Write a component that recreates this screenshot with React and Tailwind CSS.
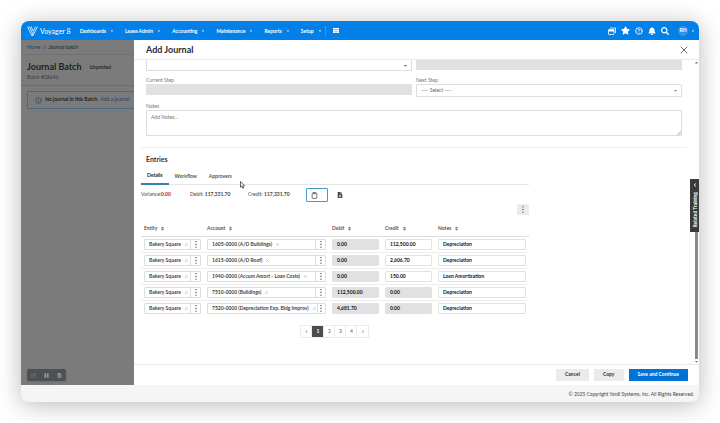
import { Clipboard, CircleHelp, Info, X } from 'lucide-react';
import { FaBell, FaCaretDown, FaCaretUp, FaChevronUp, FaFileExcel, FaPause, FaSearch, FaSort, FaStar } from 'react-icons/fa';
import { FiExternalLink } from 'react-icons/fi';

const menus = ['Dashboards', 'Lease Admin', 'Accounting', 'Maintenance', 'Reports', 'Setup'];

const entries = [
  { id: 1, account: '1605-0000 (A/D Buildings)', debit: '0.00', credit: '112,500.00', notes: 'Depreciation' },
  { id: 2, account: '1615-0000 (A/D Roof)', debit: '0.00', credit: '2,606.70', notes: 'Depreciation' },
  { id: 3, account: '1940-0000 (Accum Amort - Loan Costs)', debit: '0.00', credit: '150.00', notes: 'Loan Amortization' },
  { id: 4, account: '7510-0000 (Buildings)', debit: '112,500.00', credit: '0.00', notes: 'Depreciation' },
  { id: 5, account: '7520-0000 (Depreciation Exp. Bldg Improv)', debit: '4,681.70', credit: '0.00', notes: 'Depreciation' },
];

function Logo() {
  return (
    <svg viewBox="0 0 22 20" className="w-[11px] h-[10px]" fill="none" stroke="white" strokeWidth="1.6">
      <path d="M1 1 L9.5 19 L12.5 13 M4.5 1 L11 14.5 M8 1 L12.5 10.5 L17 1 M10 19 H12 L21 1" />
    </svg>
  );
}

function Kebab() {
  return (
    <svg viewBox="0 0 2 7" className="w-[2px] h-[7px]" fill="#555">
      <rect x="0.3" y="0.2" width="1.3" height="1.1" />
      <rect x="0.3" y="2.9" width="1.3" height="1.1" />
      <rect x="0.3" y="5.6" width="1.3" height="1.1" />
    </svg>
  );
}

function Cursor() {
  return (
    <svg viewBox="0 0 10 16" className="absolute left-[37px] top-[10px] w-[5px] h-[8px]" fill="white" stroke="#333" strokeWidth="1.5">
      <path d="M1 1 V12.5 L3.8 10 L5.6 14.5 L7.4 13.7 L5.6 9.5 H9 Z" />
    </svg>
  );
}

function Navbar() {
  return (
    <header className="flex items-center h-[19px] pl-[6px] pr-[4px] bg-[#0380e8] text-white">
      <Logo />
      <span className="ml-[2px] text-[7px] leading-[10px]">Voyager 8</span>
      <nav className="flex items-center gap-[11px] ml-[9px]">
        {menus.map((m) => (
          <button key={m} className="flex items-center gap-[4px] text-[5px] leading-[8px] font-bold">
            {m} <FaCaretDown size={4} />
          </button>
        ))}
      </nav>
      <span className="w-px h-[10px] ml-[3px] bg-[#3d9cee]" />
      <button aria-label="Grid" className="ml-[7px]">
        <svg viewBox="0 0 6 5" className="w-[6px] h-[5px]" fill="white">
          <rect width="6" height="1.4" />
          <path d="M0 1.8 H2.8 V3.2 H0 Z M3.2 1.8 H6 V3.2 H3.2 Z M0 3.6 H2.8 V5 H0 Z M3.2 3.6 H6 V5 H3.2 Z" />
        </svg>
      </button>
      <div className="flex items-center gap-[5px] ml-auto">
        <button aria-label="Windows">
          <svg viewBox="0 0 16 16" className="w-[8px] h-[8px]" fill="none" stroke="white" strokeWidth="1.6">
            <rect x="1" y="5" width="11" height="10" rx="1" />
            <path d="M1 7 H12" strokeWidth="3.5" />
            <path d="M4 2 H15 V12" />
          </svg>
        </button>
        <button aria-label="Favorites"><FaStar size={9} /></button>
        <button aria-label="Help"><CircleHelp size={8} strokeWidth={2.5} /></button>
        <button aria-label="Notifications"><FaBell size={8} /></button>
        <button aria-label="Search"><FaSearch size={8} /></button>
      </div>
      <button className="flex items-center gap-[3px] ml-[9px] text-[5px] font-bold">
        <span className="flex items-center justify-center size-[10px] rounded-full bg-[#2f93e6]">RH</span>
        <FaCaretDown size={4} />
      </button>
    </header>
  );
}

function BatchPage() {
  return (
    <aside className="flex flex-col w-[113px] shrink-0 overflow-hidden bg-[#7b7b7b] text-[#1d1f22]">
      <div className="flex items-center gap-[3px] h-[15px] px-[6px] border-b border-[#717171] text-[5px] leading-[8px]">
        <a href="#home" className="text-[#1c4469]">Home</a> <span>/</span> <span>Journal batch</span>
      </div>
      <div className="h-[31px] pt-[6px] px-[6px] border-b border-[#6c6c6c]">
        <div className="flex items-center gap-[8px]">
          <h1 className="text-[9px] leading-[12px] font-bold whitespace-nowrap">Journal Batch</h1>
          <span className="text-[5px] leading-[8px] font-semibold">Unposted</span>
        </div>
        <p className="text-[5px] leading-[8px] text-[#3c3c3c]">Batch #28646</p>
      </div>
      <div className="flex items-center gap-[2px] h-[18px] mt-[5px] ml-[6px] pl-[7px] border border-r-0 border-[#476a88] rounded-l-[1px] text-[5px] whitespace-nowrap">
        <Info size={7} className="mr-px text-[#1c4469]" />
        <strong>No journal in this Batch.</strong>
        <a href="#add" className="text-[#1c4469]">Add a journal</a>
      </div>
      <div className="flex items-center justify-around w-[39px] h-[12px] mt-auto mb-[4px] ml-[6px] rounded-[2px] bg-[#4c5154] text-[#8f9497] shadow">
        <button aria-label="Open"><FiExternalLink size={5} /></button>
        <button aria-label="Pause"><FaPause size={5} /></button>
        <button aria-label="Stop"><FaFileExcel size={5} /></button>
      </div>
    </aside>
  );
}

function LookupField({ value, label }) {
  return (
    <div className="flex h-[11px] border border-[#dcdcdc] rounded-[1px] bg-white">
      <div className="flex items-center gap-[3px] flex-1 pl-[4px] whitespace-nowrap font-bold text-[#444]">
        {value}
        <button aria-label={`Clear ${label}`} className="text-[#999]"><X size={5} /></button>
      </div>
      <button aria-label={`${label} options`} className="flex items-center justify-center w-[10px] border-l border-[#dcdcdc]"><Kebab /></button>
    </div>
  );
}

function EntryInput({ value, label, disabled }) {
  return (
    <input
      aria-label={label}
      defaultValue={value}
      disabled={disabled}
      className="block w-full h-[11px] px-[4px] border border-[#e2e2e2] rounded-[1px] font-bold text-[#111] disabled:bg-[#e1e1e1]"
    />
  );
}

function EntriesTable() {
  return (
    <table className="w-full mt-[6px] table-fixed text-[5px] leading-[8px]">
      <colgroup>
        <col className="w-[63px]" />
        <col className="w-[125px]" />
        <col className="w-[53px]" />
        <col className="w-[53px]" />
        <col />
      </colgroup>
      <thead>
        <tr className="h-[15px] border-b border-[#dedede] text-left text-[#555]">
          {['Entity', 'Account', 'Debit', 'Credit', 'Notes'].map((h) => (
            <th key={h} className="px-[3px] py-0 font-bold">
              <span className="flex items-center gap-[3px]">{h} <FaSort size={5} className="text-[#777]" /></span>
            </th>
          ))}
        </tr>
      </thead>
      <tbody>
        {entries.map((e) => (
          <tr key={e.id} className="h-[16px] border-b border-[#eeeeee] last:border-b-0">
            <td className="px-[3px] py-0"><LookupField value="Bakery Square" label="entity" /></td>
            <td className="px-[3px] py-0"><LookupField value={e.account} label="account" /></td>
            <td className="px-[3px] py-0"><EntryInput value={e.debit} label="Debit" disabled /></td>
            <td className="px-[3px] py-0"><EntryInput value={e.credit} label="Credit" disabled={e.credit === '0.00'} /></td>
            <td className="px-[3px] py-0"><EntryInput value={e.notes} label="Notes" /></td>
          </tr>
        ))}
      </tbody>
    </table>
  );
}

function JournalForm() {
  return (
    <form className="px-[12px] text-[5px]">
      <div className="grid grid-cols-2 gap-x-[4px]">
        <div className="flex items-center justify-end h-[11px] pr-[3px] border border-t-0 border-[#dedede] text-[#666]"><FaCaretDown size={5} /></div>
        <div className="h-[10px] bg-[#e1e1e1]" />
        <div className="mt-[6px]">
          <label htmlFor="current" className="block mb-[1px] leading-[6px] text-[#777]">Current Step</label>
          <input id="current" disabled className="block w-full h-[11px] bg-[#e1e1e1]" />
        </div>
        <div className="mt-[6px]">
          <label htmlFor="next" className="block mb-[1px] leading-[6px] text-[#777]">Next Step</label>
          <div className="relative">
            <select id="next" className="block w-full h-[13px] px-[4px] appearance-none border border-[#dedede] rounded-[1px] text-[#666]">
              <option>---- Select ----</option>
            </select>
            <FaCaretDown size={5} className="absolute right-[4px] top-[4px] text-[#888]" />
          </div>
        </div>
      </div>
      <label htmlFor="notes" className="block mt-[6px] mb-[1px] leading-[6px] text-[#777]">Notes</label>
      <div className="relative">
        <textarea id="notes" placeholder="Add Notes..." className="block w-full h-[26px] px-[4px] py-[2px] leading-[8px] border border-[#dedede] resize-none placeholder:text-[#777]" />
        <svg viewBox="0 0 4 4" className="absolute right-[1px] bottom-[1px] size-[4px]" stroke="#888" strokeWidth="0.6">
          <path d="M0 4 L4 0 M2 4 L4 2" />
        </svg>
      </div>
    </form>
  );
}

function Entries() {
  return (
    <section className="mx-[7px] mt-[11px] pt-[6px] border-t border-[#f0f0f0] text-[5px]">
      <h3 className="pl-[5px] text-[7px] leading-[10px] font-bold text-[#333]">Entries</h3>
      <div className="w-[71%]">
        <div className="flex mt-[7px] border-b border-[#e6e6e6] leading-[8px] text-[#555]">
          <button className="px-[6px] pb-[4px] -mb-px border-b-2 border-[#3282b8] font-bold text-[#222]">Details</button>
          <button className="px-[6px] pb-[4px] font-bold">Workflow</button>
          <button className="relative px-[6px] pb-[4px] font-bold">
            Approvers
            <Cursor />
          </button>
        </div>
        <div className="flex items-center mt-[3px] text-[#444]">
          <span className="w-[49px]">Variance:<b className="text-[#c01820]">0.00</b></span>
          <span className="w-[58px]">Debit: <b>117,331.70</b></span>
          <span className="w-[58px]">Credit: <b>117,331.70</b></span>
          <button aria-label="Paste" className="flex items-center w-[22px] h-[14px] pl-[4px] border border-[#3f9bd0] rounded-[1px]"><Clipboard size={7} strokeWidth={2.5} /></button>
          <button aria-label="Export" className="ml-[9px]"><FaFileExcel size={6} /></button>
        </div>
        <button aria-label="Table options" className="flex items-center justify-center w-[12px] h-[11px] mt-[2px] ml-auto bg-[#ebebeb]"><Kebab /></button>
        <EntriesTable />
        <div className="flex justify-center mt-[9px]">
          <div className="flex h-[13px] border border-[#ececec] divide-x divide-[#ececec] text-[#3a6f94]">
            {['«', '1', '2', '3', '4', '»'].map((p) => (
              <button key={p} className={p === '1' ? 'w-[12px] bg-[#4d4d4d] text-white font-bold' : 'w-[11px]'}>{p}</button>
            ))}
          </div>
        </div>
      </div>
    </section>
  );
}

export default function App() {
  return (
    <div className="flex flex-col min-h-screen p-[21px] bg-white font-[Lato,sans-serif]">
      <div className="relative flex flex-col flex-1 overflow-hidden rounded-[8px] bg-[#f5f5f5] shadow-[0_3px_24px_rgba(0,0,0,0.28)]">
        <Navbar />
        <div className="flex flex-1">
          <BatchPage />
          <main className="flex flex-col flex-1 bg-white">
            <div className="flex items-center justify-between h-[20px] pl-[12px] pr-[9px] border-b border-[#e8e8e8]">
              <h2 className="text-[9px] leading-[12px] font-bold text-[#2a2c30]">Add Journal</h2>
              <button aria-label="Close" className="text-[#666]"><X size={12} strokeWidth={2} /></button>
            </div>
            <div className="flex flex-1">
              <div className="flex-1">
                <JournalForm />
                <Entries />
              </div>
              <div className="flex flex-col items-center w-[5px] text-[#777]">
                <FaCaretUp size={5} />
                <div className="w-[3px] flex-1 mt-[120px] bg-[#8a8a8a]" />
                <FaCaretDown size={5} />
              </div>
            </div>
            <div className="flex items-center justify-end gap-[5px] h-[21px] pr-[11px] border-t border-[#e8e8e8] text-[5px] font-bold text-[#333]">
              <button className="h-[12px] px-[9px] bg-[#ebebeb]">Cancel</button>
              <button className="h-[12px] px-[9px] bg-[#ebebeb]">Copy</button>
              <button className="h-[12px] px-[9px] bg-[#0272d4] text-white">Save and Continue</button>
            </div>
          </main>
        </div>
        <footer className="h-[17px] pr-[5px] text-right text-[5px] leading-[18px] text-[#444]">© 2025 Copyright Yardi Systems, Inc. All Rights Reserved.</footer>
        <button className="absolute right-0 top-[158px] flex flex-col items-center justify-between w-[9px] h-[53px] py-[4px] bg-[#3b3b3b] text-white text-[5px] leading-[8px] font-bold">
          <FaChevronUp size={4} className="-rotate-90" />
          <span className="[writing-mode:vertical-rl] rotate-180">Related Training</span>
        </button>
      </div>
    </div>
  );
}
